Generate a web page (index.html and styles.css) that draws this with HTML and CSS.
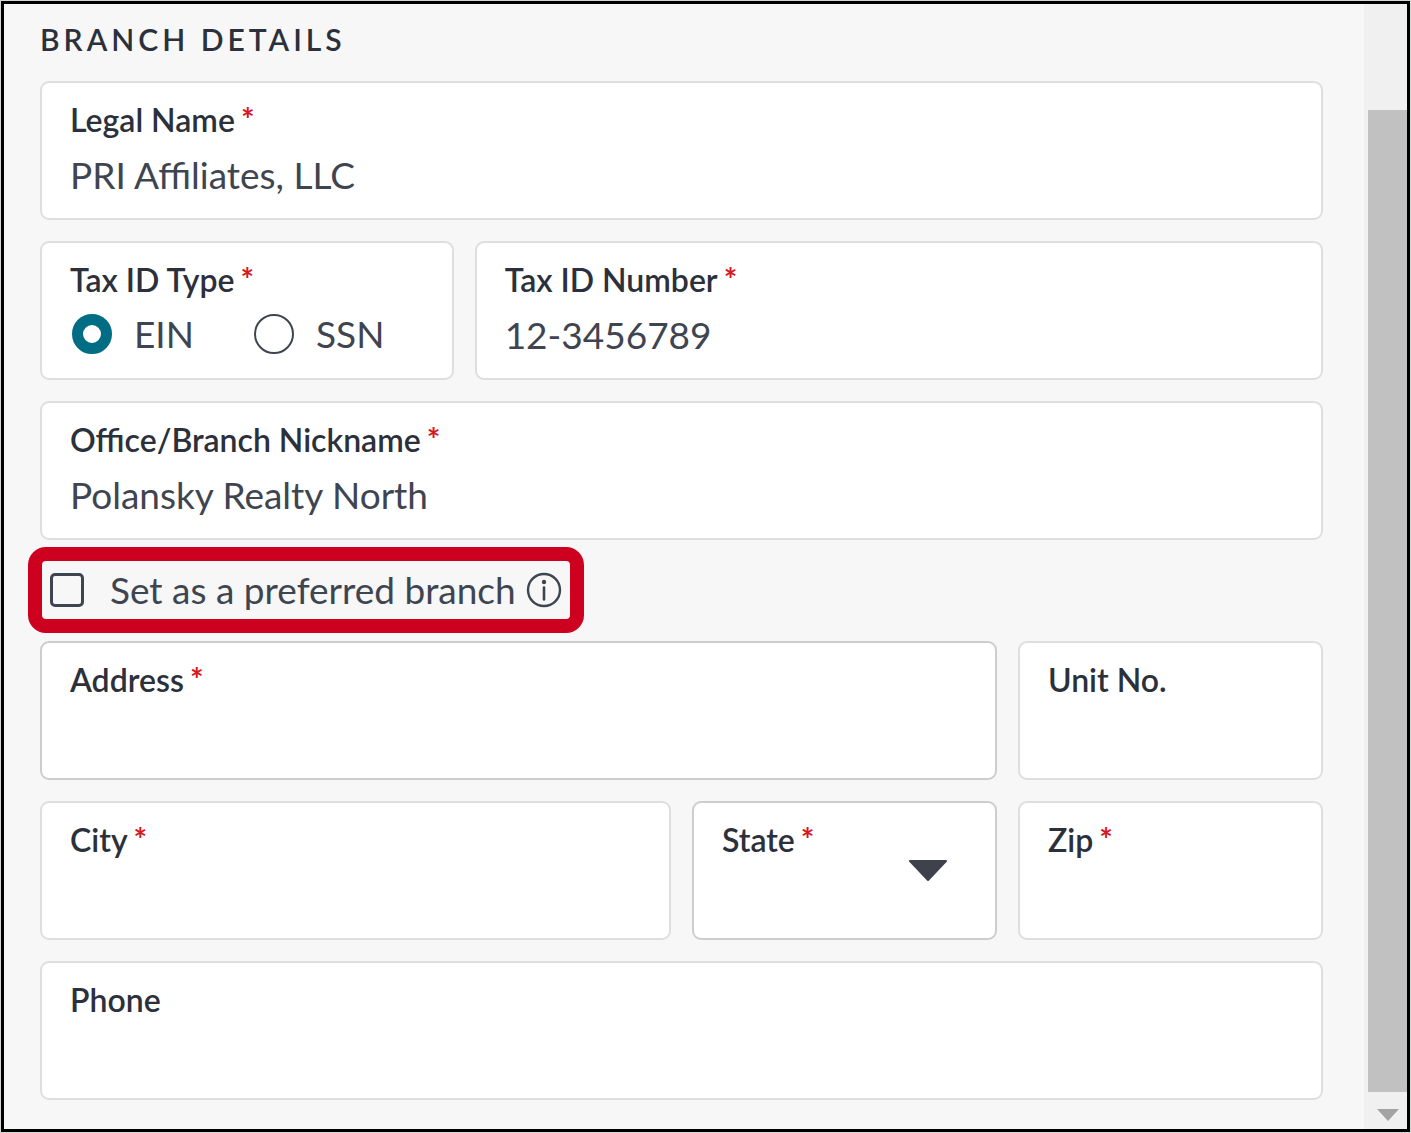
FILE: index.html
```html
<!DOCTYPE html>
<html lang="en">

<head>
    <meta charset="UTF-8">
    <meta name="viewport" content="width=device-width, initial-scale=1.0">
    <title>Branch Details</title>
    <link rel="stylesheet" href="styles.css">
</head>

<body>
    <div class="panel">
        <form class="branch-form">
            <h1>Branch Details</h1>

            <div class="fields">
                <div class="field span-12">
                    <label class="required" for="legal-name">Legal Name</label>
                    <input type="text" id="legal-name" value="PRI Affiliates, LLC">
                </div>

                <div class="field span-4" role="radiogroup" aria-labelledby="tax-type">
                    <span class="field-title required" id="tax-type">Tax ID Type</span>
                    <div class="radios">
                        <label class="radio"><input type="radio" name="tax-type" checked>EIN</label>
                        <label class="radio"><input type="radio" name="tax-type">SSN</label>
                    </div>
                </div>
                <div class="field span-8">
                    <label class="required" for="tax-id">Tax ID Number</label>
                    <input type="text" id="tax-id" value="12-3456789">
                </div>

                <div class="field span-12">
                    <label class="required" for="nickname">Office/Branch Nickname</label>
                    <input type="text" id="nickname" value="Polansky Realty North">
                </div>

                <div class="preferred">
                    <input type="checkbox" id="preferred">
                    <label for="preferred">Set as a preferred branch</label>
                    <button type="button" class="info" aria-label="More information">
                        <svg viewBox="0 0 36 36" width="36" height="36">
                            <circle cx="18" cy="18" r="16" fill="none" stroke="#3f4550" stroke-width="2.4" />
                            <circle cx="18" cy="10" r="2.2" fill="#3f4550" />
                            <path d="M18 15.5v12" stroke="#3f4550" stroke-width="2.6" stroke-linecap="round" />
                        </svg>
                    </button>
                </div>

                <div class="field strong span-9">
                    <label class="required" for="address">Address</label>
                    <input type="text" id="address">
                </div>
                <div class="field span-3">
                    <label for="unit">Unit No.</label>
                    <input type="text" id="unit">
                </div>

                <div class="field span-6">
                    <label class="required" for="city">City</label>
                    <input type="text" id="city">
                </div>
                <div class="field strong span-3">
                    <label class="required" for="state">State</label>
                    <select id="state">
                        <option></option>
                    </select>
                    <svg class="caret" viewBox="0 0 38 22" width="38" height="22">
                        <path d="M1 1h36l-18 19z" fill="#3d424d" stroke="#3d424d" stroke-width="2" stroke-linejoin="round" />
                    </svg>
                </div>
                <div class="field span-3">
                    <label class="required" for="zip">Zip</label>
                    <input type="text" id="zip">
                </div>

                <div class="field span-12">
                    <label for="phone">Phone</label>
                    <input type="tel" id="phone">
                </div>
            </div>
        </form>

        <div class="scrollbar">
            <div class="thumb"></div>
            <svg viewBox="0 0 22 12" width="22" height="12">
                <path d="M0 0h22l-11 12z" fill="#a3a3a3" />
            </svg>
        </div>
    </div>
</body>

</html>
```

FILE: styles.css
```css
* {
    box-sizing: border-box;
}

body {
    margin: 0;
    padding: 1px;
    min-height: 100vh;
    display: flex;
    background-color: #d5d8d5;
    color: #2b303b;
    font-family: Lato, "Liberation Sans", sans-serif;
}

.panel {
    flex: 1;
    display: flex;
    border: 3px solid #000;
    background-color: #f7f7f7;
}

.branch-form {
    flex: 1;
    min-width: 0;
    padding: 17px 41px 28px 36px;
}

h1 {
    margin: 0 0 24px;
    font-size: 30px;
    font-weight: 600;
    line-height: 36px;
    letter-spacing: 4px;
    text-transform: uppercase;
}

.fields {
    display: grid;
    grid-template-columns: repeat(12, minmax(0, 1fr));
    gap: 21px;
}

.span-3 {
    grid-column: span 3;
}

.span-4 {
    grid-column: span 4;
}

.span-6 {
    grid-column: span 6;
}

.span-8 {
    grid-column: span 8;
}

.span-9 {
    grid-column: span 9;
}

.span-12 {
    grid-column: span 12;
}

.field {
    position: relative;
    display: flex;
    flex-direction: column;
    gap: 14px;
    padding: 19px 28px 22px;
    border: 2px solid #dedede;
    border-radius: 9px;
    background-color: #fff;
}

.field.strong {
    border-color: #cdcdcd;
}

.field > label,
.field-title {
    font-size: 32px;
    font-weight: 600;
    line-height: 36px;
}

.required::after {
    content: "*";
    margin-left: 6px;
    color: #d8171e;
    font-weight: 700;
}

input[type="text"],
input[type="tel"],
select {
    appearance: none;
    width: 100%;
    height: 44px;
    padding: 0;
    border: none;
    outline: none;
    background: transparent;
    color: #3f4550;
    font-family: inherit;
    font-size: 37px;
    font-weight: 400;
}

.radios {
    display: flex;
    gap: 58px;
    height: 44px;
}

.radio {
    display: flex;
    align-items: center;
    gap: 22px;
    color: #3f4550;
    font-size: 37px;
    line-height: 44px;
}

input[type="radio"] {
    appearance: none;
    width: 40px;
    height: 40px;
    margin: 0 0 0 2px;
    border: 2px solid #3f4550;
    border-radius: 50%;
    background-color: #fff;
}

input[type="radio"]:checked {
    border: 11px solid #006d85;
}

/* red callout ring round the checkbox row */
.preferred {
    grid-column: span 12;
    justify-self: start;
    display: flex;
    align-items: center;
    height: 58px;
    margin: 0 0 1px 2px;
    padding: 0 8px;
    border-radius: 4px;
    outline: 14px solid #ce001f;
    color: #3f4550;
    font-size: 37px;
    line-height: 44px;
}

input[type="checkbox"] {
    appearance: none;
    width: 34px;
    height: 34px;
    margin: 0 26px 0 0;
    border: 3px solid #3f4550;
    border-radius: 5px;
}

.info {
    display: flex;
    margin-left: 10px;
    padding: 0;
    border: none;
    background: none;
}

.caret {
    position: absolute;
    top: 57px;
    right: 48px;
    pointer-events: none;
}

.scrollbar {
    display: flex;
    flex-direction: column;
    align-items: center;
    width: 43px;
    padding: 106px 0 8px 4px;
    background-color: #f0f0f0;
}

.thumb {
    flex: 1;
    width: 100%;
    margin-bottom: 17px;
    background-color: #c1c1c1;
}
```
